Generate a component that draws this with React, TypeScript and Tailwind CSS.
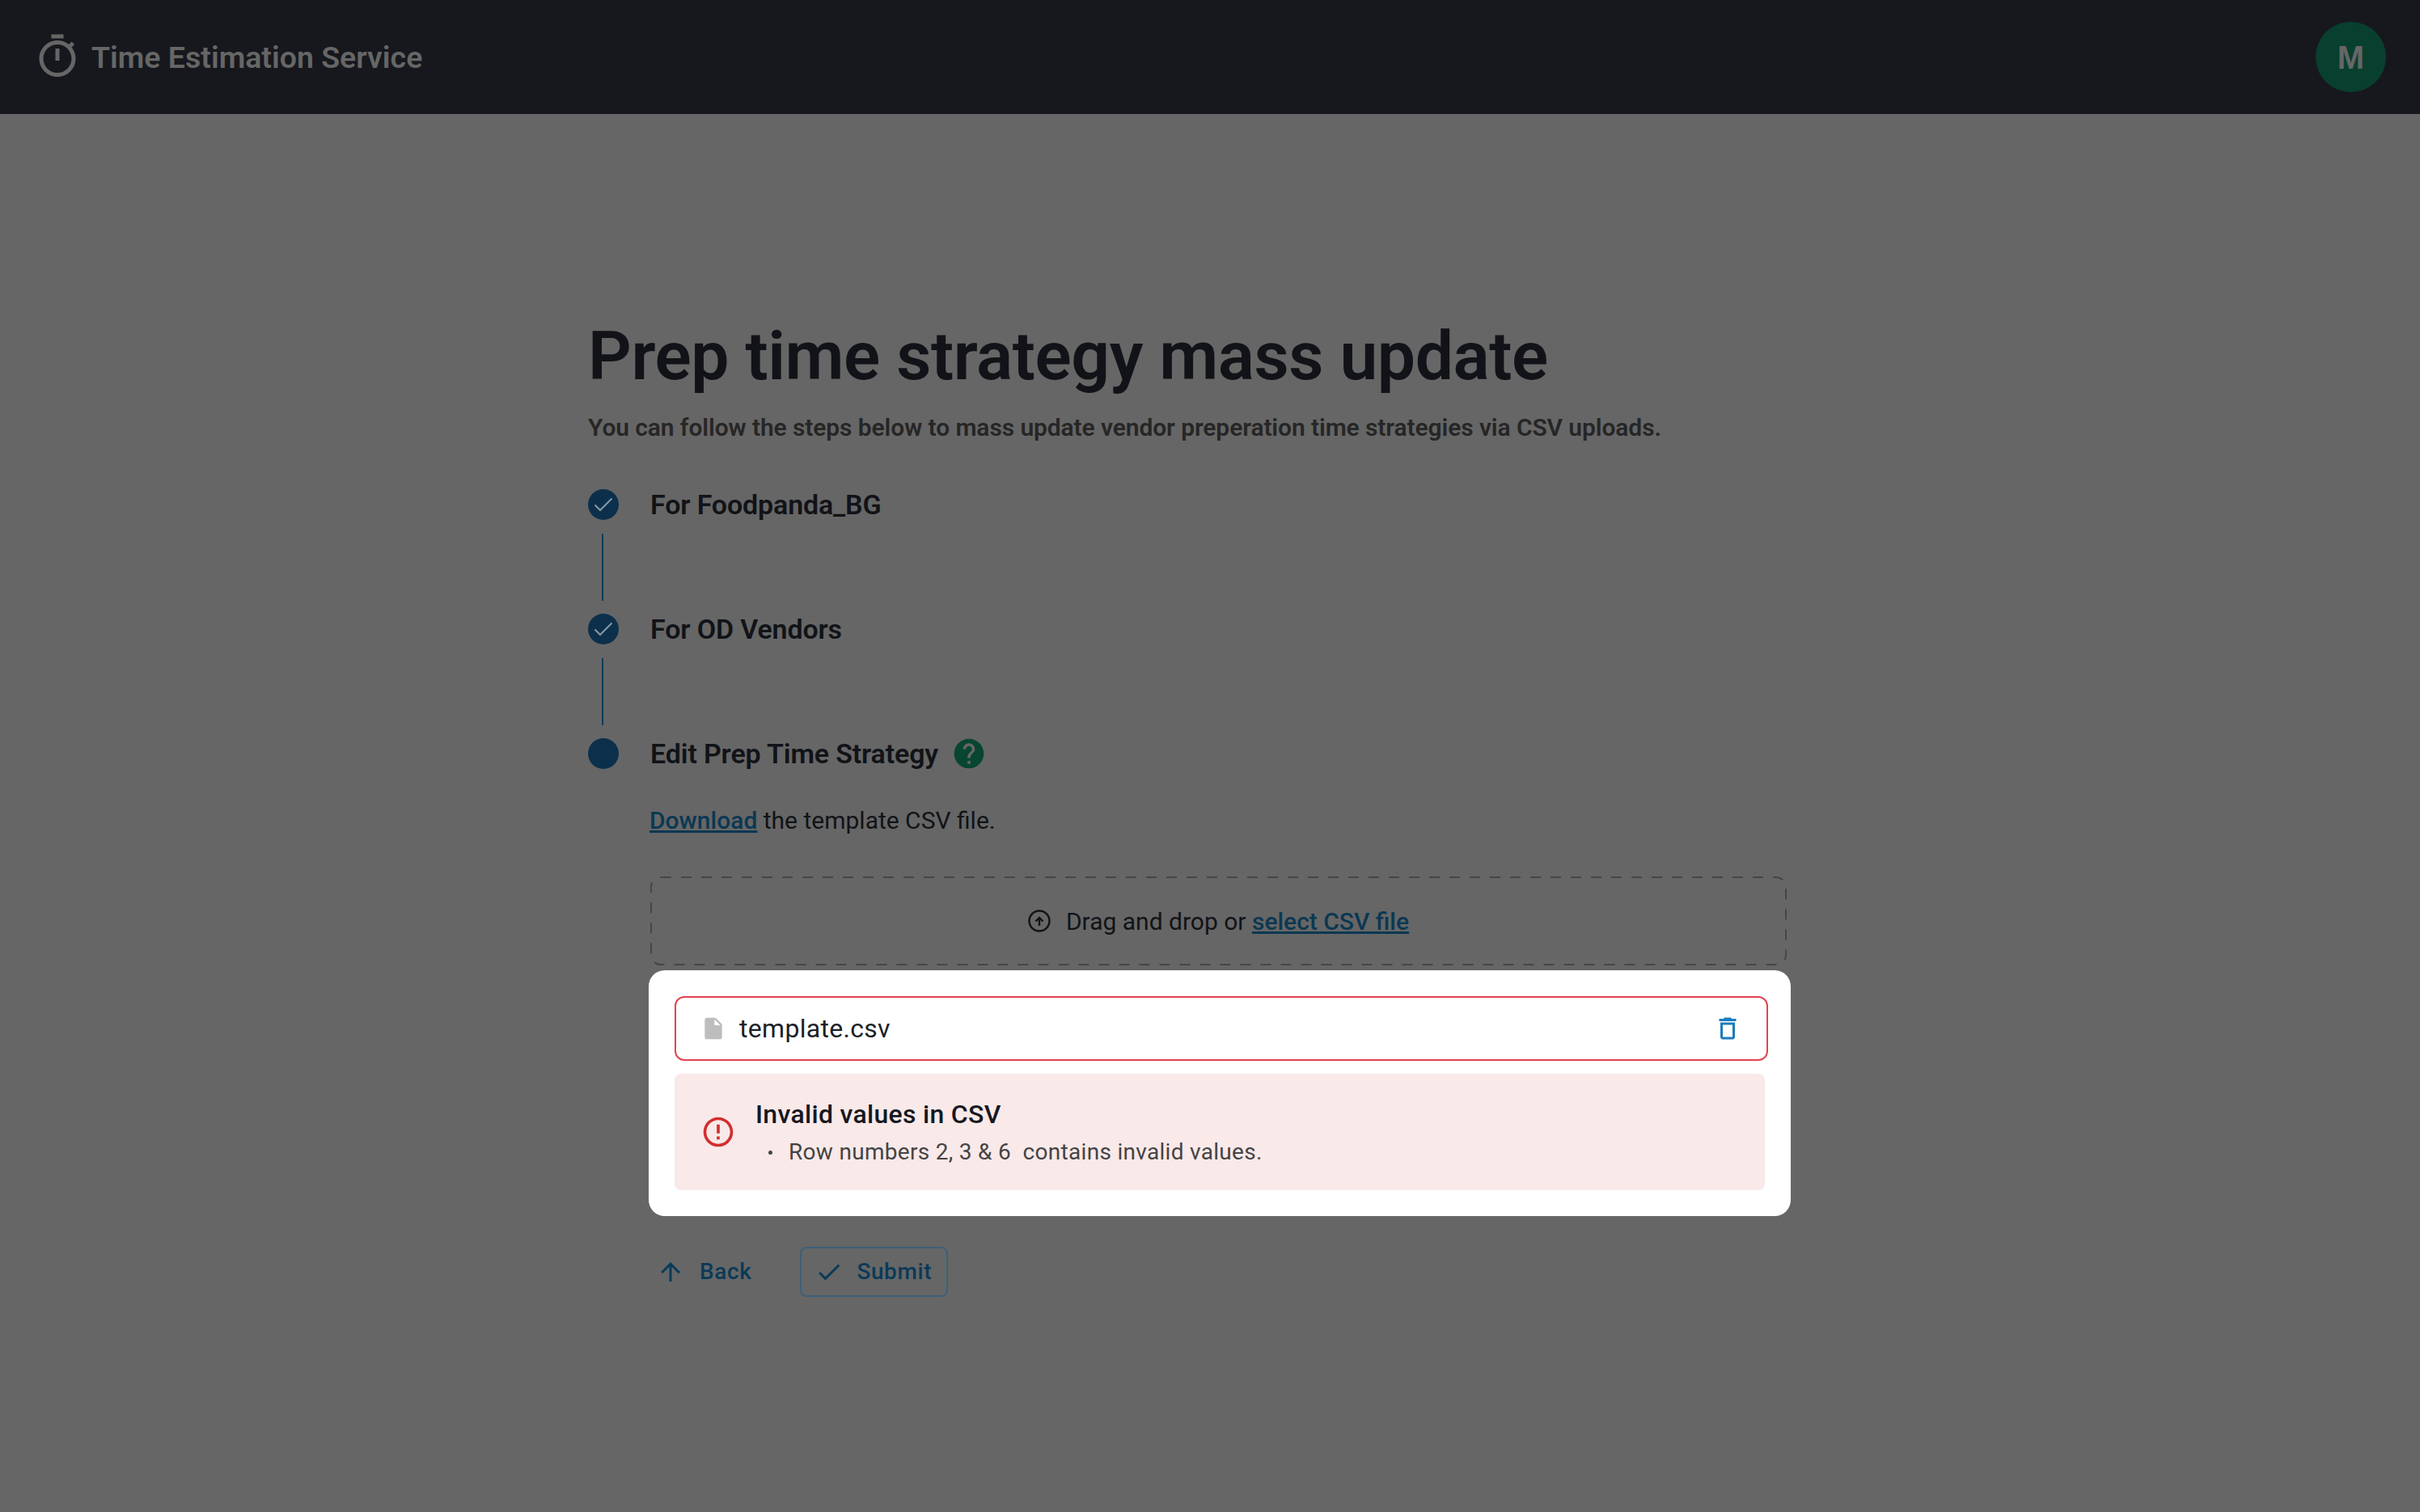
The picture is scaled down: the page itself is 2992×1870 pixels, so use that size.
const Mui = ({ d, size, className }: { d: string; size: number; className?: string }) => (
  <svg viewBox="0 0 24 24" width={size} height={size} fill="currentColor" className={`shrink-0 ${className ?? ""}`}>
    <path d={d} />
  </svg>
);

const TIMER = "M15 1H9v2h6V1zm-4 13h2V8h-2v6zm8.03-6.61l1.42-1.42c-.43-.51-.9-.99-1.41-1.41l-1.42 1.42C16.07 4.74 14.12 4 12 4c-4.97 0-9 4.03-9 9s4.02 9 9 9 9-4.03 9-9c0-2.12-.74-4.07-1.97-5.61zM12 20c-3.87 0-7-3.13-7-7s3.13-7 7-7 7 3.13 7 7-3.13 7-7 7z";
const CHECK = "M9 16.17 4.83 12l-1.42 1.41L9 19 21 7l-1.41-1.41z";
const HELP = "M12 2C6.48 2 2 6.48 2 12s4.48 10 10 10 10-4.48 10-10S17.52 2 12 2zm1 17h-2v-2h2v2zm2.07-7.75l-.9.92C13.45 12.9 13 13.5 13 15h-2v-.5c0-1.1.45-2.1 1.17-2.83l1.24-1.26c.37-.36.59-.86.59-1.41 0-1.1-.9-2-2-2s-2 .9-2 2H8c0-2.21 1.79-4 4-4s4 1.79 4 4c0 .88-.36 1.68-.93 2.25z";
const FILE = "M6 2c-1.1 0-1.99.9-1.99 2L4 20c0 1.1.89 2 1.99 2H18c1.1 0 2-.9 2-2V8l-6-6H6zm7 7V3.5L18.5 9H13z";
const TRASH = "M6 19c0 1.1.9 2 2 2h8c1.1 0 2-.9 2-2V7H6v12zM8 9h8v10H8V9zm7.5-5l-1-1h-5l-1 1H5v2h14V4h-3.5z";
const ERROR = "M11 15h2v2h-2zm0-8h2v6h-2zm.99-5C6.47 2 2 6.48 2 12s4.47 10 9.99 10C17.52 22 22 17.52 22 12S17.52 2 11.99 2zM12 20c-4.42 0-8-3.58-8-8s3.58-8 8-8 8 3.58 8 8-3.58 8-8 8z";
const ARROW_UP = "M4 12l1.41 1.41L11 7.83V20h2V7.83l5.58 5.59L20 12l-8-8-8 8z";

const StepDone = ({ label }: { label: string }) => (
  <div className="flex h-[38px] items-center">
    <span className="flex h-[38px] w-[38px] items-center justify-center rounded-full bg-[#0c304b]">
      <svg viewBox="0 0 38 38" width={38} height={38} fill="none" stroke="#8699a6" strokeWidth="2">
        <path d="M8.5 19.5 15 26 29.5 11.5" />
      </svg>
    </span>
    <span className="ml-[39px] text-[34px] font-semibold tracking-[-0.15px] text-[#111318]">{label}</span>
  </div>
);

const Connector = () => <div className="mb-[16px] ml-[17px] mt-[17px] h-[83px] w-[2px] bg-[#0d3c5c]" />;

export default function App() {
  return (
    <div className="flex min-h-screen flex-col bg-[#666666] [font-family:Roboto,sans-serif]">
      <header className="flex h-[141px] items-center justify-between bg-[#16181d] pl-[41px] pr-[42px]">
        <div className="flex items-center text-[#666666]">
          <Mui d={TIMER} size={60} className="-mt-[2px]" />
          <span className="ml-[12px] mt-[2px] text-[37.5px] font-semibold">Time Estimation Service</span>
        </div>
        <div className="flex h-[87px] w-[87px] items-center justify-center rounded-full bg-[#093f2e] text-[40px] font-bold text-[#666666] [font-family:'Liberation_Sans',sans-serif]">
          M
        </div>
      </header>

      <main className="mx-auto w-[1538px] pt-[251px]">
        <h1 className="text-[84px] font-semibold leading-[98px] tracking-[-0.45px] text-[#111318]">Prep time strategy mass update</h1>
        <p className="mt-[21px] text-[30px] font-semibold leading-[36px] tracking-[-0.1px] text-[#262626]">
          You can follow the steps below to mass update vendor preperation time strategies via CSV uploads.
        </p>

        <div className="mt-[58px]">
          <StepDone label="For Foodpanda_BG" />
          <Connector />
          <StepDone label="For OD Vendors" />
          <Connector />
          <div className="flex h-[38px] items-center">
            <span className="h-[38px] w-[38px] rounded-full bg-[#0c304b]" />
            <span className="ml-[39px] text-[34px] font-semibold tracking-[-0.15px] text-[#111318]">Edit Prep Time Strategy</span>
            <Mui d={HELP} size={44} className="ml-[16px] text-[#084631]" />
          </div>
        </div>

        <div className="ml-[76px]">
          <p className="mt-[44px] text-[30px] leading-[40px] text-[#111317]">
            <a className="font-medium text-[#0b3852] underline">Download</a> the template CSV file.
          </p>

          <div className="relative ml-[1px] mt-[49px] flex h-[110px] w-[1405px] items-center justify-center text-[30px] text-[#111317]">
            <svg className="absolute inset-0" width={1405} height={110} fill="none">
              <rect x="1" y="1" width="1403" height="108" rx="12" stroke="#464646" strokeWidth="2" strokeDasharray="13 12" />
            </svg>
            <svg viewBox="0 0 28 28" width={28} height={28} fill="none" stroke="currentColor" className="mr-[19px] shrink-0">
              <circle cx="14" cy="14" r="12.5" strokeWidth="2.4" />
              <path d="M14 20v-10M9.5 14.5 14 10l4.5 4.5" strokeWidth="2.4" />
            </svg>
            <span>
              Drag and drop or <a className="font-medium text-[#0b3852] underline">select CSV file</a>
            </span>
          </div>

          <div className="-ml-[1px] mt-[6px] w-[1412px] rounded-[20px] bg-white pb-[32px] pl-[32px] pr-[28px] pt-[32px]">
            <div className="flex h-[80px] items-center rounded-[12px] border-2 border-[#e2444f] pl-[30px] pr-[30px]">
              <Mui d={FILE} size={32} className="text-[#bdbdbd]" />
              <span className="ml-[16px] flex-1 text-[32px] tracking-[0.3px] text-[#1b1f27]">template.csv</span>
              <Mui d={TRASH} size={36} className="text-[#1c7cbd]" />
            </div>
            <div className="mt-[16px] flex h-[144px] w-[1348px] items-center rounded-[8px] bg-[#f9e9e9] pl-[32px]">
              <Mui d={ERROR} size={44} className="text-[#d32f2f]" />
              <div className="ml-[24px] pt-[3px]">
                <div className="text-[32px] font-medium leading-[40px] tracking-[0.3px] text-[#16181d]">Invalid values in CSV</div>
                <div className="mt-[7px] flex items-center text-[28px] leading-[40px] tracking-[0.3px] text-[#444444]">
                  <span className="ml-[16px] h-[5px] w-[5px] rounded-full bg-[#444444]" />
                  <span className="ml-[20px] whitespace-pre">Row numbers 2, 3 &amp; 6  contains invalid values.</span>
                </div>
              </div>
            </div>
          </div>

          <div className="mt-[38px] flex items-center text-[28px] font-medium tracking-[0.6px] text-[#0b3a58]">
            <button className="flex h-[61px] items-center pl-[8px]">
              <Mui d={ARROW_UP} size={36} />
              <span className="ml-[18px]">Back</span>
            </button>
            <button className="ml-[60px] flex h-[62px] w-[183px] items-center rounded-[8px] border-2 border-[#3d6079] pl-[16px]">
              <Mui d={CHECK} size={36} />
              <span className="ml-[16px]">Submit</span>
            </button>
          </div>
        </div>
      </main>
    </div>
  );
}
